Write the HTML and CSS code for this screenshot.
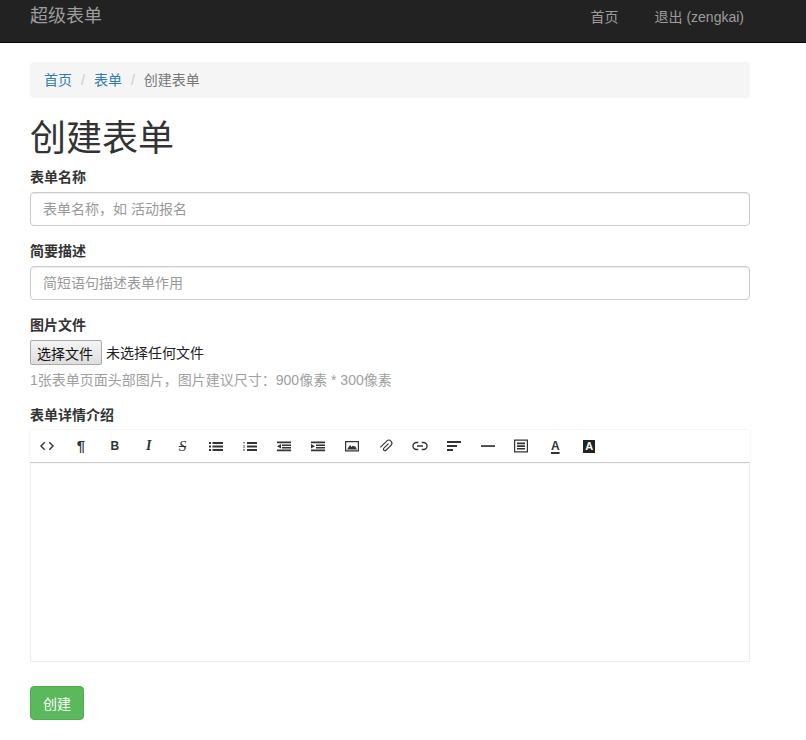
FILE: index.html
```html
<!DOCTYPE html>

<html>
    <head>
        <meta charset="utf-8">
        <title>创建表单</title>
        <link rel="stylesheet" href="styles.css">
    </head>

    <body>
        <div class="navbar">
            <a class="brand">超级表单</a>

            <div class="nav">
                <a>首页</a>
                <a>退出 (zengkai)</a>
            </div>
        </div>

        <div class="container">
            <ol class="breadcrumb">
                <li><a>首页</a></li>
                <li class="sep">/</li>
                <li><a>表单</a></li>
                <li class="sep">/</li>
                <li class="active">创建表单</li>
            </ol>

            <h1>创建表单</h1>

            <div class="group">
                <label>表单名称</label>
                <input type="text" class="box" placeholder="表单名称，如 活动报名">
            </div>

            <div class="group">
                <label>简要描述</label>
                <input type="text" class="box" placeholder="简短语句描述表单作用">
            </div>

            <div class="group">
                <label>图片文件</label>
                <div class="file">
                    <button class="file-btn">选择文件</button>
                    <span>未选择任何文件</span>
                </div>
                <p class="help">1张表单页面头部图片，图片建议尺寸：900像素 * 300像素</p>
            </div>

            <div class="group">
                <label>表单详情介绍</label>

                <div class="toolbar">
                    <a class="tool"><svg viewBox="0 0 16 16"><path class="line" d="M5.700 4.300 2 8l3.700 3.700M10.300 4.300 14 8l-3.700 3.700"/></svg></a>
                    <a class="tool pilcrow">¶</a>
                    <a class="tool bold">B</a>
                    <a class="tool italic">I</a>
                    <a class="tool strike">S</a>
                    <a class="tool"><svg viewBox="0 0 16 16"><path d="M1 4h2v2H1zM4.500 4H15v2H4.500zM1 7.500h2v2H1zM4.500 7.500H15v2H4.500zM1 11h2v2H1zM4.500 11H15v2H4.500z"/></svg></a>
                    <a class="tool"><svg viewBox="0 0 16 16"><path d="M1.500 4h1v1.500h-1zM1 7.500h2v.7H1zM1 9h2v.6H1zM1 11.500h2v.5H1zM1 12.500h2v.5H1zM5 4h10v2H5zM5 7.500h10v2H5zM5 11h10v2H5z"/></svg></a>
                    <a class="tool"><svg viewBox="0 0 16 16"><path d="M1 3.500h14v1.700H1zM6 6.500h9v1.500H6zM6 9h9v1.500H6zM1 11.500h14v1.700H1zM1 8.300l4-2.300v4.600z"/></svg></a>
                    <a class="tool"><svg viewBox="0 0 16 16"><path d="M1 3.500h14v1.700H1zM6 6.500h9v1.500H6zM6 9h9v1.500H6zM1 11.500h14v1.700H1zM5 8.300 1 6v4.600z"/></svg></a>
                    <a class="tool"><svg viewBox="0 0 16 16"><path d="M1 3h14v10.500H1zm1.200 1.200v8.100h11.600V4.200z" fill-rule="evenodd"/><path d="M3 11.500 6 7l1.500 2L9 7.500l1 1 1-.5 2 3.500z"/></svg></a>
                    <a class="tool"><svg viewBox="0 0 16 16"><path class="line thin" transform="rotate(45 8 8)" d="M8 4.500V11a1.500 1.500 0 0 0 3 0V4a3 3 0 0 0-6 0v9"/></svg></a>
                    <a class="tool"><svg viewBox="0 0 16 16"><path class="line" d="M6.300 4.500H4.500a3.500 3.500 0 0 0 0 7h1.800M9.700 4.500h1.800a3.500 3.500 0 0 1 0 7H9.700M5 8h6"/></svg></a>
                    <a class="tool"><svg viewBox="0 0 16 16"><path d="M1 3h14v2H1zM1 7h10v2H1zM1 11h6v2H1z"/></svg></a>
                    <a class="tool"><svg viewBox="0 0 16 16"><path d="M1 7.200h14v1.700H1z"/></svg></a>
                    <a class="tool"><svg viewBox="0 0 16 16"><path d="M1 1.500h14v13H1zm1.200 1.200v10.600h11.600V2.700z" fill-rule="evenodd"/><path d="M4 4.500h8v1.700H4zM4 7.200h8v1.700H4zM4 9.900h8v1.700H4z"/></svg></a>
                    <a class="tool under">A</a>
                    <a class="tool"><span class="inverse">A</span></a>
                </div>

                <div class="editor"></div>
            </div>

            <button class="btn-create">创建</button>
        </div>
    </body>
</html>
```

FILE: styles.css
```css
*
{
    box-sizing: border-box;
}

body
{
    margin: 0;
    font-family: "Liberation Sans", "Noto Sans CJK SC", sans-serif;
    font-size: 14px;
    line-height: 20px;
    color: #333;
    background: #fff;
}

.navbar
{
    display: flex;
    justify-content: space-between;
    height: 43px;
    padding: 6px 62px 0 30px;
    background: #222;
    border-bottom: 1px solid #080808;
    color: #9d9d9d;
}

.brand
{
    font-size: 18px;
    line-height: 20px;
}

.nav
{
    display: flex;
    gap: 36px;
    padding-top: 1px;
}

.container
{
    width: 720px;
    margin-left: 30px;
    padding-top: 19px;
}

.breadcrumb
{
    display: flex;
    gap: 9px;
    height: 36px;
    margin: 0 0 21px;
    padding: 8px 14px;
    list-style: none;
    background: #f5f5f5;
    border-radius: 4px;
}

.breadcrumb a
{
    color: #337ab7;
}

.sep
{
    color: #ccc;
}

.active
{
    color: #777;
}

h1
{
    margin: 0 0 8px;
    font-size: 36px;
    font-weight: 400;
    line-height: 40px;
    color: #333;
}

label
{
    display: block;
    margin-bottom: 5px;
    font-weight: bold;
}

.group
{
    margin-bottom: 15px;
}

.box
{
    display: block;
    width: 100%;
    height: 34px;
    padding: 6px 12px;
    font-family: inherit;
    font-size: 14px;
    color: #555;
    border: 1px solid #ccc;
    border-radius: 4px;
    box-shadow: inset 0 1px 1px rgba(0, 0, 0, .075);
}

.box::placeholder
{
    color: #999;
    opacity: 1;
}

.file
{
    display: flex;
    align-items: center;
    gap: 4px;
    height: 25px;
    color: #222;
}

.file-btn
{
    width: 72px;
    height: 25px;
    padding: 0 2px 0 0;
    font-family: inherit;
    font-size: 14px;
    color: #111;
    background: linear-gradient(#f4f4f4, #dedede);
    border: 1px solid #a9a9a9;
    border-radius: 2px;
}

.help
{
    margin: 5px 0 0;
    color: #a0a0a0;
}

.toolbar
{
    display: flex;
    height: 32px;
    margin-top: 5px;
    background: #fff;
    box-shadow: 0 -1px 0 #f6f6f6, 0 1px 1px rgba(0, 0, 0, .2);
}

.tool
{
    display: flex;
    align-items: center;
    justify-content: center;
    width: 33.9px;
    height: 32px;
    color: #333;
    font-size: 12px;
}

.tool svg
{
    width: 16px;
    height: 16px;
    fill: #333;
}

.tool .line
{
    fill: none;
    stroke: #333;
    stroke-width: 1.4;
}

.tool .thin
{
    stroke-width: 1.1;
}

.pilcrow
{
    font-size: 15px;
    font-weight: bold;
}

.bold
{
    font-weight: bold;
    font-size: 12px;
}

.italic
{
    font-family: "Liberation Serif", serif;
    font-style: italic;
    font-weight: bold;
    font-size: 14px;
}

.strike
{
    font-family: "Liberation Serif", serif;
    font-style: italic;
    font-size: 15px;
    text-decoration: line-through;
}

.under
{
    font-weight: bold;
    text-decoration: underline;
    text-underline-offset: 2px;
    text-decoration-thickness: 2px;
}

.inverse
{
    width: 12px;
    height: 13px;
    font-size: 11px;
    font-weight: bold;
    line-height: 13px;
    text-align: center;
    color: #fff;
    background: #222;
}

.editor
{
    height: 199px;
    margin-top: 1px;
    border: 1px solid #eee;
    border-top: none;
}

.btn-create
{
    display: block;
    width: 54px;
    height: 34px;
    margin-top: 24px;
    padding: 0;
    font-family: inherit;
    font-size: 14px;
    color: #fff;
    background: #5cb85c;
    border: 1px solid #4cae4c;
    border-radius: 4px;
}
```
